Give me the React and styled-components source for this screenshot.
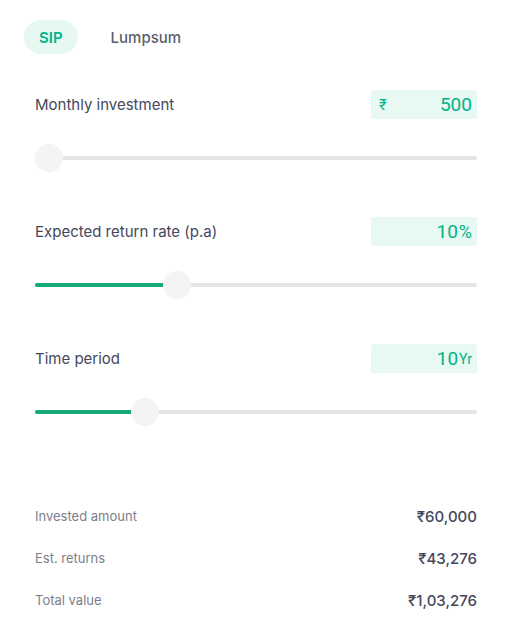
import React from 'react';
import styled, { createGlobalStyle } from 'styled-components';

const GlobalStyle = createGlobalStyle`
  body {
    margin: 0;
    background: #ffffff;
    font-family: Inter, "Noto Sans", sans-serif;
    -webkit-font-smoothing: antialiased;
  }
`

const Wrapper = styled.div`
  width: 514px;
  box-sizing: border-box;
  padding: 20px 37px 0 35px;
`

const TabRow = styled.div`
  display: flex;
  gap: 18px;
  margin-left: -11px;
`

const Tab = styled.button`
  height: 34px;
  padding: 0 15px;
  border: none;
  border-radius: 17px;
  font-family: inherit;
  font-size: 15px;
  font-weight: ${p => (p.active ? 600 : 500)};
  color: ${p => (p.active ? '#00b386' : '#5c5f70')};
  background: ${p => (p.active ? '#e6f8f1' : 'transparent')};
  cursor: pointer;
`

const Section = styled.div`
  margin-top: ${p => p.gap}px;
`

const Header = styled.div`
  display: flex;
  justify-content: space-between;
  align-items: center;
  height: 29px;
`

const Label = styled.span`
  font-size: 15px;
  color: #44475b;
`

const ValueBox = styled.div`
  width: 106px;
  height: 29px;
  box-sizing: border-box;
  padding: 0 5px 0 8px;
  display: flex;
  align-items: center;
  background: #e8f8f2;
  border-radius: 2px;
  color: #00b386;
`

const Prefix = styled.span`
  font-size: 14px;
  margin-right: auto;
`

const Amount = styled.span`
  margin-left: auto;
  font-family: Roboto, Inter, sans-serif;
  font-size: 19px;
  font-weight: 400;
`

const Unit = styled.span`
  font-family: Roboto, Inter, sans-serif;
  font-size: ${p => p.size}px;
  margin-left: 1px;
`

const SliderBox = styled.div`
  position: relative;
  height: 28px;
  margin-top: 25px;
`

const Track = styled.div`
  position: absolute;
  left: 0;
  right: 0;
  top: 12px;
  height: 4px;
  background: #e4e4e4;
  border-radius: 2px;
`

const Fill = styled.div`
  height: 100%;
  background: #17a877;
  border-radius: 2px 0 0 2px;
`

const Thumb = styled.div`
  position: absolute;
  top: 0;
  width: 28px;
  height: 28px;
  border-radius: 50%;
  background: #f4f4f4;
`

const Results = styled.div`
  margin-top: 69px;
`

const ResultRow = styled.div`
  display: flex;
  justify-content: space-between;
  align-items: center;
  height: 42px;
`

const ResultLabel = styled.span`
  font-size: 13px;
  color: #7c7e8c;
`

const ResultValue = styled.span`
  font-size: 15px;
  font-weight: 500;
  color: #44475b;
`

const TRACK_SPAN = 442 - 28;

const Slider = ({ value, min, max }) => {
  const left = ((value - min) / (max - min)) * TRACK_SPAN;
  return (
    <SliderBox>
      <Track>
        <Fill style={{ width: left }} />
      </Track>
      <Thumb style={{ left }} />
    </SliderBox>
  );
};

const fields = [
  { label: 'Monthly investment', value: 500, min: 500, max: 100000, prefix: '₹' },
  { label: 'Expected return rate (p.a)', value: 10, min: 1, max: 30, unit: '%', unitSize: 18 },
  { label: 'Time period', value: 10, min: 1, max: 40, unit: 'Yr', unitSize: 14 },
];

const results = [
  ['Invested amount', '₹60,000'],
  ['Est. returns', '₹43,276'],
  ['Total value', '₹1,03,276'],
];

const App = () => {
  return (
    <>
      <GlobalStyle />
      <Wrapper>
        <TabRow>
          <Tab active>SIP</Tab>
          <Tab>Lumpsum</Tab>
        </TabRow>

        {fields.map((f, i) => (
          <Section key={f.label} gap={i === 0 ? 36 : 45}>
            <Header>
              <Label>{f.label}</Label>
              <ValueBox>
                {f.prefix && <Prefix>{f.prefix}</Prefix>}
                <Amount>{f.value}</Amount>
                {f.unit && <Unit size={f.unitSize}>{f.unit}</Unit>}
              </ValueBox>
            </Header>
            <Slider value={f.value} min={f.min} max={f.max} />
          </Section>
        ))}

        <Results>
          {results.map(([label, value]) => (
            <ResultRow key={label}>
              <ResultLabel>{label}</ResultLabel>
              <ResultValue>{value}</ResultValue>
            </ResultRow>
          ))}
        </Results>
      </Wrapper>
    </>
  );
};

export default App;
